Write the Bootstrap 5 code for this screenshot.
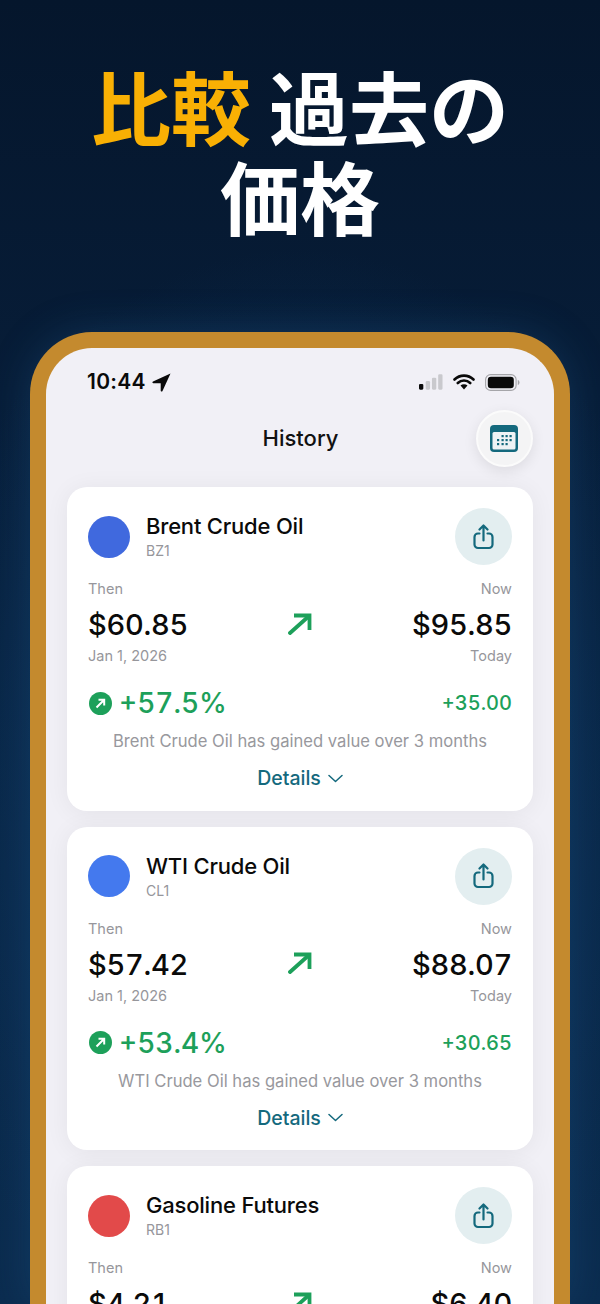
<!DOCTYPE html>
<html lang="ja">
<head>
  <meta charset="UTF-8" />
  <title>History</title>
  <link href="https://cdn.jsdelivr.net/npm/bootstrap@5.3.0/dist/css/bootstrap.min.css" rel="stylesheet" />
  <style>
    html, body { height: 1304px; overflow: hidden; }
    body {
      font-family: Inter, "Liberation Sans", sans-serif;
      background: radial-gradient(ellipse 420px 560px at 50% 62%, #0d3660 0%, rgba(14,58,102,0) 100%), linear-gradient(180deg, #05162c 0%, #071d38 30%, #0b2c4f 100%);
    }
    .promo-title {
      height: 332px;
      padding-top: 59px;
      font-family: "Noto Sans CJK JP", sans-serif;
      font-size: 80px;
      font-weight: 700;
      line-height: 90px;
      color: #fff;
    }
    .promo-accent { color: #f9b004; }
    .phone-frame {
      margin: 0 30px;
      height: 972px;
      border: 16px solid #c48a2e;
      border-bottom: 0;
      border-radius: 62px 62px 0 0;
      background: #f1f0f6;
      overflow: hidden;
      box-shadow: 0 0 40px rgba(40,110,170,.25);
    }
    .status-row { height: 68px; padding: 0 34px 0 41px; }
    .status-time { font-size: 21px; font-weight: 600; color: #0a0a0a; letter-spacing: .3px; }
    .status-arrow { margin-left: 2px; }
    .status-icons { gap: 10px; }
    .title-row { height: 57px; margin-right: 21px; margin-top: -6px; }
    .screen-title { font-size: 22px; font-weight: 500; color: #111; margin: -1px 0 0 11px; }
    .round-btn { width: 57px; height: 57px; border-radius: 50%; border: 0; padding: 0; }
    .cal-btn { background: #f4f4f5; border: 2px solid #fbfbfb; box-shadow: 0 4px 14px rgba(0,0,0,.09); }
    .cal-btn svg { margin-right: 1px; }
    .share-btn { background: #e3eef0; }
    .quote-list { padding: 20px 21px 0; gap: 16px; }
    .quote-box {
      height: 323.5px;
      background: #fff;
      border-radius: 20px;
      padding: 21px 21px 0;
      box-shadow: 0 2px 24px rgba(0,0,0,.06);
      flex: none;
    }
    .quote-dot { width: 42px; height: 42px; border-radius: 50%; margin-right: 16px; }
    .quote-name { font-size: 22px; font-weight: 500; line-height: 26px; color: #0a0a0a; letter-spacing: -.2px; }
    .quote-code { font-size: 14px; line-height: 18px; color: #96969b; margin-top: 3px; }
    .meta-label { font-size: 14.5px; line-height: 18px; color: #96969b; }
    .price-val { font-size: 29px; font-weight: 500; line-height: 36px; color: #0a0a0a; margin: 9px 0 4px; letter-spacing: -.3px; font-variant-numeric: tabular-nums; }
    .pct-group { margin-left: 1px; gap: 7px; }
    .pct-val { font-size: 28px; font-weight: 500; line-height: 36px; color: #1da05a; font-variant-numeric: tabular-nums; }
    .diff-val { font-size: 20px; font-weight: 500; color: #1da05a; font-variant-numeric: tabular-nums; }
    .quote-note { font-size: 16.6px; line-height: 22px; color: #98989d; margin-top: 9px; }
    .details-link { font-size: 19.5px; font-weight: 500; line-height: 26px; color: #14697d; margin-top: 13px; gap: 7px; }
    .top-gap { margin-top: 15px; }
    .pct-gap { margin-top: 20px; }
  </style>
</head>
<body>

  <h1 class="promo-title text-center m-0">
    <span class="promo-accent">比較</span> 過去の<br />価格
  </h1>

  <div class="phone-frame">
    <div class="status-row d-flex align-items-center justify-content-between">
      <div class="d-flex align-items-center gap-1">
        <span class="status-time">10:44</span>
        <svg class="status-arrow" width="19" height="19" viewBox="0 0 19 19"><path d="M18.500.5 1 8.500c-1 .5-.7 1.800.4 1.800H8.700v7.300c0 1.100 1.300 1.400 1.800.4z" fill="#0a0a0a"/></svg>
      </div>
      <div class="status-icons d-flex align-items-center">
        <svg width="24" height="16" viewBox="0 0 25 16">
          <rect x="0" y="10" width="4.500" height="6" rx="1.200" fill="#0a0a0a"/>
          <rect x="7" y="7" width="4.500" height="9" rx="1.200" fill="#c9c9cd"/>
          <rect x="13.500" y="3.500" width="4.500" height="12.500" rx="1.200" fill="#c9c9cd"/>
          <rect x="20" y="0" width="4.500" height="16" rx="1.200" fill="#c9c9cd"/>
        </svg>
        <svg width="22" height="16" viewBox="0 0 22 16">
          <path d="M1.500 5.500a13.500 13.500 0 0 1 19 0M4.800 9a9 9 0 0 1 12.400 0" fill="none" stroke="#0a0a0a" stroke-width="2.600" stroke-linecap="round"/>
          <path d="M7.500 11.600a5 5 0 0 1 7 0L11 15.600z" fill="#0a0a0a"/>
        </svg>
        <svg width="35" height="17" viewBox="0 0 35 17">
          <rect x=".6" y=".6" width="30.500" height="15.800" rx="5" fill="none" stroke="#a5a5a9" stroke-width="1.100"/>
          <rect x="2.800" y="2.800" width="26" height="11.400" rx="3.200" fill="#0a0a0a"/>
          <path d="M32.800 6v5c1-.3 1.700-1.300 1.700-2.500s-.7-2.200-1.700-2.500z" fill="#a5a5a9"/>
        </svg>
      </div>
    </div>

    <div class="title-row position-relative d-flex align-items-center justify-content-end">
      <div class="screen-title position-absolute top-50 start-50 translate-middle">History</div>
      <button class="round-btn cal-btn d-flex align-items-center justify-content-center" type="button" aria-label="Calendar">
        <svg width="28" height="27" viewBox="0 0 28 27">
          <rect x="0" y="0" width="28" height="27" rx="4" fill="#14697d"/>
          <rect x="2.500" y="7" width="23" height="17.500" rx="1.500" fill="#eef3f5"/>
          <g fill="#14697d">
            <rect x="11.500" y="10" width="2.200" height="2.200"/><rect x="15.500" y="10" width="2.200" height="2.200"/><rect x="19.500" y="10" width="2.200" height="2.200"/>
            <rect x="7" y="14" width="2.200" height="2.200"/><rect x="11.500" y="14" width="2.200" height="2.200"/><rect x="15.500" y="14" width="2.200" height="2.200"/><rect x="19.500" y="14" width="2.200" height="2.200"/>
            <rect x="7" y="18" width="2.200" height="2.200"/><rect x="11.500" y="18" width="2.200" height="2.200"/><rect x="15.500" y="18" width="2.200" height="2.200"/>
          </g>
        </svg>
      </button>
    </div>

    <div class="quote-list d-flex flex-column" id="quoteList"></div>
  </div>

  <script src="https://cdn.jsdelivr.net/npm/bootstrap@5.3.0/dist/js/bootstrap.bundle.min.js"></script>
  <script>
    const quotes = [
      { name: 'Brent Crude Oil', code: 'BZ1', color: '#4069de', then: '$60.85', now: '$95.85', pct: '+57.5%', diff: '+35.00' },
      { name: 'WTI Crude Oil', code: 'CL1', color: '#4479ee', then: '$57.42', now: '$88.07', pct: '+53.4%', diff: '+30.65' },
      { name: 'Gasoline Futures', code: 'RB1', color: '#e24a4a', then: '$4.21', now: '$6.40', pct: '+52.0%', diff: '+2.19' }
    ];

    const shareIcon = `<svg width="21" height="26" viewBox="0 0 21 26" fill="none" stroke="#14697d" stroke-width="2.200" stroke-linecap="round" stroke-linejoin="round"><path d="M6.500 9.500H5a3.500 3.500 0 0 0-3.500 3.500v7.500A3.500 3.500 0 0 0 5 24h11a3.500 3.500 0 0 0 3.500-3.500V13A3.500 3.500 0 0 0 16 9.500h-1.500"/><path d="M10.500 16.500V2M6.500 5.500l4-4 4 4"/></svg>`;
    const upArrow = `<svg width="24" height="22" viewBox="0 0 24 22" fill="none" stroke="#1da05a" stroke-width="3.800"><path d="M2 20 21 3" stroke-linecap="round"/><path d="M6 2.500h15.500V17"/></svg>`;
    const pctIcon = `<svg width="23" height="23" viewBox="0 0 23 23"><circle cx="11.500" cy="11.500" r="11.500" fill="#1da05a"/><path d="M7.500 15.500l7.500-7.500M9.500 7.800h5.700v5.700" fill="none" stroke="#fff" stroke-width="2"/></svg>`;

    document.getElementById('quoteList').innerHTML = quotes.map(q => `
      <div class="quote-box">
        <div class="d-flex align-items-center">
          <div class="quote-dot" style="background:${q.color}"></div>
          <div class="flex-grow-1">
            <div class="quote-name">${q.name}</div>
            <div class="quote-code">${q.code}</div>
          </div>
          <button class="round-btn share-btn d-flex align-items-center justify-content-center" type="button" aria-label="Share">${shareIcon}</button>
        </div>
        <div class="d-flex justify-content-between align-items-center top-gap">
          <div>
            <div class="meta-label">Then</div>
            <div class="price-val">${q.then}</div>
            <div class="meta-label">Jan 1, 2026</div>
          </div>
          <div>${upArrow}</div>
          <div class="text-end">
            <div class="meta-label">Now</div>
            <div class="price-val">${q.now}</div>
            <div class="meta-label">Today</div>
          </div>
        </div>
        <div class="d-flex justify-content-between align-items-center pct-gap">
          <div class="pct-group d-flex align-items-center">${pctIcon}<span class="pct-val">${q.pct}</span></div>
          <div class="diff-val">${q.diff}</div>
        </div>
        <div class="quote-note text-center">${q.name} has gained value over 3 months</div>
        <div class="details-link d-flex justify-content-center align-items-center">Details
          <svg width="15" height="9" viewBox="0 0 15 9" fill="none" stroke="#14697d" stroke-width="1.500" stroke-linecap="round" stroke-linejoin="round"><path d="M1 1.500l6.500 6 6.500-6"/></svg>
        </div>
      </div>`).join('');
  </script>
</body>
</html>
